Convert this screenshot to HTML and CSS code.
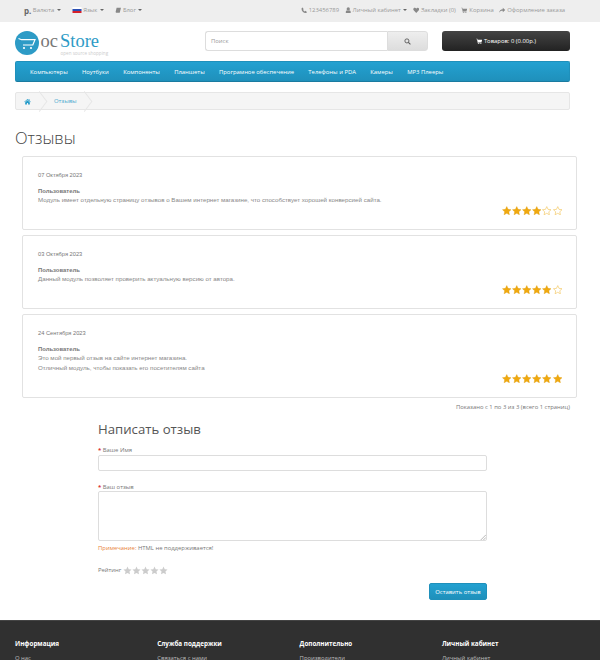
FILE: index.html
```html
<!DOCTYPE html>
<html lang="ru">
<head>
<meta charset="utf-8">
<title>Отзывы</title>
<link rel="stylesheet" href="styles.css">
</head>
<body>
<svg class="defs" width="0" height="0">
  <defs>
    <symbol id="star" viewBox="0 0 24 24"><path d="M12 1.5l3.2 7 7.6.9-5.6 5.2 1.5 7.6L12 18.4l-6.7 3.8 1.5-7.6L1.200 9.400l7.600-.9z"/></symbol>
    <symbol id="cart" viewBox="0 0 24 24"><path d="M1 3h4l.7 3H23l-2.500 9H8l.4 2h12v2H6.800L3.500 5H1z"/><circle cx="9" cy="21" r="2"/><circle cx="18" cy="21" r="2"/></symbol>
    <symbol id="caret" viewBox="0 0 8 4"><path d="M0 0h8L4 4z"/></symbol>
  </defs>
</svg>
<div class="page">
  <nav class="topbar">
    <div class="top-group left">
      <span class="top-item"><b class="rub">р.</b> Валюта <svg class="caret"><use href="#caret"/></svg></span>
      <span class="top-item"><svg class="flag" viewBox="0 0 9 6"><rect width="9" height="2" fill="#fff"/><rect y="2" width="9" height="2" fill="#2b4fb3"/><rect y="4" width="9" height="2" fill="#d5202a"/></svg> Язык <svg class="caret"><use href="#caret"/></svg></span>
      <span class="top-item"><svg class="ico" viewBox="0 0 24 24"><path d="M6 3h16l-4 16H2zM4 20h14l-.5 2H3z"/></svg> Блог <svg class="caret"><use href="#caret"/></svg></span>
    </div>
    <div class="top-group right">
      <span class="top-item"><svg class="ico" viewBox="0 0 24 24"><path d="M6 2l4 6-2.500 2.500c1 2.500 3.500 5 6 6L16 14l6 4c-.5 2.500-3 4-5 4C9 22 2 14 2 7c0-2 1.500-4.500 4-5z"/></svg> 123456789</span>
      <span class="top-item"><svg class="ico" viewBox="0 0 24 24"><circle cx="12" cy="7" r="6"/><path d="M3 23v-5c0-3 2-5 5-5h8c3 0 5 2 5 5v5z"/></svg> Личный кабинет <svg class="caret"><use href="#caret"/></svg></span>
      <span class="top-item"><svg class="ico" viewBox="0 0 24 24"><path d="M12 22L2.500 12C-1 8 2 2.500 7 3c2 .2 4 1.500 5 3.500C13 4.500 15 3.200 17 3c5-.5 8 5 4.500 9z"/></svg> Закладки (0)</span>
      <span class="top-item"><svg class="ico"><use href="#cart"/></svg> Корзина</span>
      <span class="top-item"><svg class="ico" viewBox="0 0 24 24"><path d="M14 3l9 8-9 8v-5C8 14 4 15 1 21c0-8 5-13 13-13z"/></svg> Оформление заказа</span>
    </div>
  </nav>

  <header class="header">
    <div class="logo">
      <svg class="logo-mark" viewBox="0 0 24 24">
        <circle cx="12" cy="12" r="12" fill="#2d9bc6"/>
        <path d="M3.500 7.500l3 1.200h13.500l-2.200 5.300H8" fill="none" stroke="#fff" stroke-width="1.200"/>
        <circle cx="9" cy="17" r="1.100" fill="#fff"/><circle cx="16" cy="17" r="1.100" fill="#fff"/>
      </svg>
      <div class="logo-text">
        <div class="logo-name"><span class="logo-oc">oc</span><span class="logo-store">Store</span></div>
        <div class="logo-sub">open source shopping</div>
      </div>
    </div>
    <div class="search">
      <div class="search-input">Поиск</div>
      <div class="search-btn"><svg class="search-ico" viewBox="0 0 24 24"><circle cx="10" cy="10" r="7" fill="none" stroke="#555" stroke-width="3"/><path d="M15 15l7 7" stroke="#555" stroke-width="3.500"/></svg></div>
    </div>
    <div class="cart-btn"><svg class="ico white"><use href="#cart"/></svg> Товаров: 0 (0.00р.)</div>
  </header>

  <ul class="menu">
    <li>Компьютеры</li><li>Ноутбуки</li><li>Компоненты</li><li>Планшеты</li><li>Програмное обеспечение</li><li>Телефоны и PDA</li><li>Камеры</li><li>MP3 Плееры</li>
  </ul>

  <div class="breadcrumb">
    <span class="crumb first"><svg class="home" viewBox="0 0 24 24"><path d="M12 3L1 13l1.500 1.500L12 6l9.500 8.500L23 13l-4-3.600V4h-3v2.700z"/><path d="M12 8l-8 7v7h6v-5h4v5h6v-7z"/></svg></span>
    <span class="crumb">Отзывы</span>
  </div>

  <h1 class="title">Отзывы</h1>

  <section class="reviews">
    <article class="review">
      <p class="date">07 Октября 2023</p>
      <p class="author">Пользователь</p>
      <p class="text">Модуль имеет отдельную страницу отзывов о Вашем интернет магазине, что способствует хорошей конверсией сайта.</p>
      <div class="stars">
        <svg class="star on"><use href="#star"/></svg><svg class="star on"><use href="#star"/></svg><svg class="star on"><use href="#star"/></svg><svg class="star on"><use href="#star"/></svg><svg class="star off"><use href="#star"/></svg><svg class="star off"><use href="#star"/></svg>
      </div>
    </article>
    <article class="review">
      <p class="date">03 Октября 2023</p>
      <p class="author">Пользователь</p>
      <p class="text">Данный модуль позволяет проверить актуальную версию от автора.</p>
      <div class="stars">
        <svg class="star on"><use href="#star"/></svg><svg class="star on"><use href="#star"/></svg><svg class="star on"><use href="#star"/></svg><svg class="star on"><use href="#star"/></svg><svg class="star on"><use href="#star"/></svg><svg class="star off"><use href="#star"/></svg>
      </div>
    </article>
    <article class="review">
      <p class="date">24 Сентября 2023</p>
      <p class="author">Пользователь</p>
      <p class="text">Это мой первый отзыв на сайте интернет магазина.<br>Отличный модуль, чтобы показать его посетителям сайта</p>
      <div class="stars">
        <svg class="star on"><use href="#star"/></svg><svg class="star on"><use href="#star"/></svg><svg class="star on"><use href="#star"/></svg><svg class="star on"><use href="#star"/></svg><svg class="star on"><use href="#star"/></svg><svg class="star on"><use href="#star"/></svg>
      </div>
    </article>
  </section>

  <div class="pagination">Показано с 1 по 3 из 3 (всего 1 страниц)</div>

  <section class="form">
    <h2 class="form-title">Написать отзыв</h2>
    <div class="label"><span class="req">*</span> Ваше Имя</div>
    <div class="input"></div>
    <div class="label second"><span class="req">*</span> Ваш отзыв</div>
    <div class="textarea"><svg class="grip" viewBox="0 0 8 8"><path d="M1 8l7-7M4.500 8L8 4.500" stroke="#888" stroke-width=".8"/></svg></div>
    <div class="note"><span class="note-key">Примечание:</span> HTML не поддерживается!</div>
    <div class="rating">Рейтинг
      <svg class="rstar"><use href="#star"/></svg><svg class="rstar"><use href="#star"/></svg><svg class="rstar"><use href="#star"/></svg><svg class="rstar"><use href="#star"/></svg><svg class="rstar"><use href="#star"/></svg>
    </div>
    <div class="actions"><div class="submit">Оставить отзыв</div></div>
  </section>

  <footer class="footer">
    <div class="fcol"><h5>Информация</h5><p>О нас</p></div>
    <div class="fcol"><h5>Служба поддержки</h5><p>Связаться с нами</p></div>
    <div class="fcol"><h5>Дополнительно</h5><p>Производители</p></div>
    <div class="fcol"><h5>Личный кабинет</h5><p>Личный кабинет</p></div>
  </footer>
</div>
</body>
</html>
```
FILE: styles.css
```css
* { box-sizing: border-box; }
html, body { margin: 0; padding: 0; background: #fff; }
body { font-family: "Open Sans", sans-serif; font-size: 5.900px; color: #777; }
.defs { position: absolute; }
.page { width: 600px; height: 660px; overflow: hidden; }
p { margin: 0; }

.topbar { height: 22px; background: #eee; display: flex; justify-content: space-between; align-items: center; padding: 0 35px 2px 24px; color: #999; }
.top-group { display: flex; align-items: center; }
.left { gap: 11px; }
.right { gap: 5.500px; }
.top-item { display: flex; align-items: center; gap: 1.500px; white-space: nowrap; }
.rub { font-size: 8px; color: #666; }
.ico { width: 6.500px; height: 6.500px; fill: #888; flex: none; }
.ico.white { fill: #fff; }
.caret { width: 4px; height: 2px; fill: #666; margin-left: 1px; }
.flag { width: 10px; height: 6px; margin-right: 0; }

.header { display: flex; align-items: flex-start; padding: 9px 30px 0 15px; height: 38px; }
.logo { display: flex; width: 190px; gap: 1.500px; }
.logo-mark { width: 24px; height: 24px; flex: none; }
.logo-text { padding-top: 1px; }
.logo-name { font-family: "Liberation Serif", serif; font-size: 18.500px; line-height: 18px; }
.logo-oc { color: #777; margin-right: 2px; }
.logo-store { color: #2d9bc6; }
.logo-sub { font-size: 4.600px; line-height: 4px; margin-top: .500px; color: #ccc; margin-left: 20px; }
.search { display: flex; width: 223px; height: 20px; }
.search-input { flex: 1; background: #fff; border: 1px solid #ddd; border-right: 0; border-radius: 3px 0 0 3px; padding: 0 5px; line-height: 18px; color: #999; }
.search-btn { width: 41px; background: linear-gradient(#eee, #ddd); border: 1px solid #ddd; border-radius: 0 3px 3px 0; display: flex; align-items: center; justify-content: center; }
.search-ico { width: 7px; height: 7px; }
.cart-btn { margin-left: 14px; width: 128px; height: 20px; background: linear-gradient(#444, #222); border-radius: 3px; color: #fff; display: flex; align-items: center; justify-content: center; gap: 1.500px; }

.menu { list-style: none; margin: 1px 30px 0 15px; padding: 0 0 0 14px; height: 21px; display: flex; gap: 14.300px; align-items: center; background: linear-gradient(#23a1d1, #1f90bb); border: 1px solid #1f90bb; border-bottom-color: #1a7ba0; border-radius: 2px; color: #fff; white-space: nowrap; }

.breadcrumb { margin: 10px 30px 0 15px; height: 18px; background: #f5f5f5; border: 1px solid #e6e6e6; border-radius: 2px; display: flex; align-items: center; padding-left: 8px; }
.crumb { position: relative; color: #4aa9cf; display: flex; align-items: center; height: 16px; padding-right: 22px; }
.crumb.first { padding-right: 23px; }
.crumb::after { content: ""; position: absolute; right: 8px; top: -1px; width: 12px; height: 12px; border-top: 1px solid #e6e6e6; border-right: 1px solid #e6e6e6; transform: translateY(3px) rotate(45deg) skew(8deg, 8deg); }
.home { width: 7px; height: 7px; fill: #229ac8; }

.title { margin: 19px 0 0 15px; font-weight: 300; font-size: 16.500px; line-height: 18px; color: #444; }

.reviews { margin: 9px 23px 0 22px; display: flex; flex-direction: column; gap: 5px; }
.review { position: relative; height: 74px; border: 1px solid #e2e2e2; border-radius: 2px; padding: 14px 15px 0; font-family: "Liberation Sans", sans-serif; color: #777; }
.review:nth-child(3) { height: 84px; }
.date { font-size: 5.700px; line-height: 8px; margin-bottom: 8px; }
.author { font-weight: 700; font-size: 5.900px; line-height: 8px; }
.text { font-size: 6.200px; line-height: 10px; color: #888; }
.stars { position: absolute; right: 14px; bottom: 14px; display: flex; gap: .600px; }
.star { width: 9.500px; height: 9.500px; }
.star.on { fill: #f0a90f; stroke: #e09b08; stroke-width: 1; }
.star.off { fill: #fff; stroke: #f2c14e; stroke-width: 1.500; }

.pagination { margin: 5px 30px 0 0; text-align: right; line-height: 9px; }

.form { margin: 8px 113px 0 98px; }
.form-title { margin: 0; font-weight: 400; font-size: 13.200px; line-height: 18px; color: #555; }
.label { margin-top: 8px; line-height: 8px; height: 8px; }
.label.second { margin-top: 12px; }
.req { color: #d9302c; font-weight: 700; }
.input { height: 16px; margin-top: 1px; border: 1px solid #ddd; border-radius: 2px; background: #fff; }
.textarea { position: relative; height: 50px; margin-top: 0; border: 1px solid #ddd; border-radius: 2px; }
.grip { position: absolute; right: 0; bottom: 0; width: 6px; height: 6px; }
.note { margin-top: 3px; line-height: 9px; }
.note-key { color: #e8833a; }
.rating { margin-top: 12px; height: 10px; display: flex; align-items: center; }
.rstar { width: 9px; height: 9px; fill: #ccc; }
.rstar:first-of-type { margin-left: 2px; }
.actions { display: flex; justify-content: flex-end; margin-top: 8px; }
.submit { width: 58px; height: 17px; background: linear-gradient(#23a1d1, #1f90bb); border: 1px solid #1f90bb; border-radius: 2px; color: #fff; display: flex; align-items: center; justify-content: center; }

.footer { margin-top: 20px; height: 40px; background: #303030; border-top: 1px solid #444; display: grid; grid-template-columns: repeat(4, 142.300px); padding: 19px 0 0 15px; color: #bbb; }
.footer h5 { margin: 0 0 5.500px; font-size: 6.300px; line-height: 8px; color: #fff; font-weight: 700; }
.footer p { line-height: 8px; }
```
